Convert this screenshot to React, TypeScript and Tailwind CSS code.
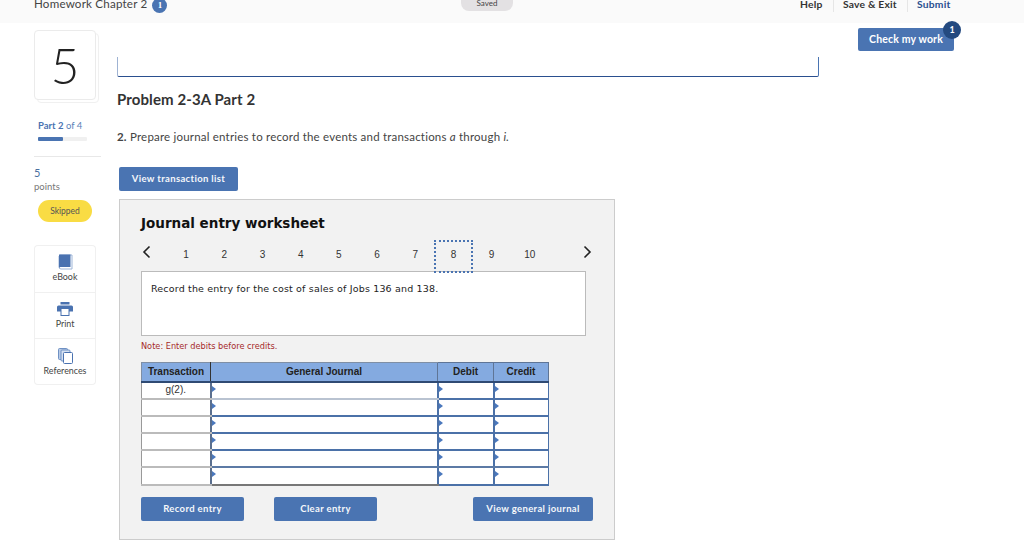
const lato = "font-['Lato','Open_Sans',sans-serif]";
const verdana = "font-['DejaVu_Sans',sans-serif]";
const arial = "font-['Liberation_Sans',Arial,sans-serif]";

// Journal table rows: border colour under each input row
const rows = [
  { label: "g(2).", line: "border-b-[#b9c3d1]", side: "border-b-[#4b71a8]" },
  { label: "", line: "border-b-[#4b71a8]", side: "border-b-[#4b71a8]" },
  { label: "", line: "border-b-[#4b71a8]", side: "border-b-[#4b71a8]" },
  { label: "", line: "border-b-[#4b71a8]", side: "border-b-[#4b71a8]" },
  { label: "", line: "border-b-[#5c7aa5]", side: "border-b-[#5c7aa5]" },
  { label: "", line: "border-b-[#777777]", side: "border-b-[#4b71a8]" },
];

const tabs = ["1", "2", "3", "4", "5", "6", "7", "8", "9", "10"];

function Marker() {
  return (
    <span className="absolute left-0 top-[3px] h-0 w-0 border-y-[3px] border-l-[4px] border-y-transparent border-l-[#4a78bd]" />
  );
}

function BookIcon() {
  return (
    <svg width="15" height="16" viewBox="0 0 15 16">
      <path d="M2 1h12v14H3a2 2 0 0 1-2-2V2z" fill="#ffffff" stroke="#9db5d8" />
      <path d="M1 0.5h11.5v12.5H2.6A1.6 1.6 0 0 0 1 14.2z" fill="#4a72b0" />
    </svg>
  );
}

function PrintIcon() {
  return (
    <svg width="16" height="14" viewBox="0 0 16 14">
      <rect x="3.5" y="0" width="9" height="2.5" fill="#4a72b0" />
      <path d="M1.5 3.5h13A1.5 1.5 0 0 1 16 5v4.5H0V5a1.5 1.5 0 0 1 1.5-1.5z" fill="#4a72b0" />
      <rect x="4" y="6.5" width="8" height="7" fill="#ffffff" stroke="#4a72b0" />
    </svg>
  );
}

function RefIcon() {
  return (
    <svg width="15" height="16" viewBox="0 0 15 16">
      <rect x="0.5" y="0.5" width="9" height="11" rx="1" fill="#b9cbe6" stroke="#6f91c4" />
      <rect x="3" y="2" width="9" height="11" rx="1" fill="#d5e0f1" stroke="#6f91c4" />
      <rect x="5.5" y="4.5" width="9" height="11" rx="1" fill="#ffffff" stroke="#4a72b0" />
    </svg>
  );
}

function Tool({ icon, label, className }: { icon: React.ReactNode; label: string; className: string }) {
  return (
    <div className={`flex w-[62px] flex-col items-center border border-[#f0f0f0] bg-white ${className}`}>
      <div className="flex h-[16px] items-center">{icon}</div>
      <span className={`mt-[1px] text-[8.9px] leading-[12px] text-[#444444] ${lato}`}>{label}</span>
    </div>
  );
}

function BlueButton({ label, className }: { label: string; className: string }) {
  return (
    <button className={`flex h-[24px] items-center justify-center rounded-[2px] bg-[#4a74b2] pt-[1px] text-[9.5px] font-bold tracking-[0.35px] text-[#f4f7fb] ${lato} ${className}`}>
      {label}
    </button>
  );
}

export default function App() {
  return (
    <div className={`h-[559px] w-[1024px] overflow-hidden bg-white text-[#333333] ${lato}`}>
      {/* Top bar */}
      <div className="flex h-[23px] items-start overflow-hidden bg-[#fafafa] pl-[34px]">
        <div className="-mt-[6px] flex w-[427px] items-center">
          <span className="text-[11.6px] leading-[15px] tracking-[0.2px] text-[#444444]">Homework Chapter 2</span>
          <span className="ml-[5px] mt-[4px] flex h-[15px] w-[15px] items-center justify-center rounded-full bg-[#4a74b2] font-['Liberation_Serif',serif] text-[9px] font-bold text-white">
            1
          </span>
        </div>
        <div className="-mt-[1px] flex h-[12px] w-[52px] items-end justify-center rounded-b-[8px] bg-[#e3e1e3] pb-[3px] text-[8px] leading-[10px] text-[#444444]">
          Saved
        </div>
        <div className="ml-[287px] -mt-[2px] flex items-start text-[10.3px] font-bold leading-[13px] tracking-[0.2px]">
          <span className="w-[33px] text-[#333333]">Help</span>
          <span className="h-[14px] w-[1px] bg-[#e6e6e6]" />
          <span className="ml-[9px] w-[64px] text-[#333333]">Save &amp; Exit</span>
          <span className="h-[14px] w-[1px] bg-[#e6e6e6]" />
          <span className="ml-[9px] text-[#2a4f8f]">Submit</span>
        </div>
      </div>

      <div className="flex pl-[34px]">
        {/* Sidebar */}
        <div className="w-[83px] pt-[7px]">
          <div className="relative h-[73px] w-[65px]">
            <div className="absolute left-[3px] top-[3px] h-[70px] w-[62px] rounded-[4px] border border-[#f0f0f0]" />
            <div className="absolute left-0 top-0 flex h-[70px] w-[62px] items-center justify-center rounded-[4px] border border-[#ebebeb] bg-white text-[50px] font-light leading-none text-[#222222]">
              5
            </div>
          </div>
          <p className="mt-[17px] pl-[4px] text-[9.5px] leading-[12px] text-[#5a7fb8]">
            <span className="font-bold text-[#4a74b2]">Part 2</span> of 4
          </p>
          <div className="ml-[4px] mt-[5px] h-[4px] w-[49px] rounded-[1px] bg-[#f0f0f0]">
            <div className="h-full w-[25px] rounded-[1px] bg-[#4a74b2]" />
          </div>
          <div className="mt-[15px] h-[1px] w-[67px] bg-[#e8e8e8]" />
          <p className="mt-[9px] text-[11px] leading-[13px] text-[#4a6f9f]">5</p>
          <p className="mt-[1px] text-[9.5px] leading-[13px] text-[#777777]">points</p>
          <div className="ml-[4px] mt-[7px] flex h-[22px] w-[54px] items-center justify-center rounded-full bg-[#f9dc44] text-[8.5px] text-[#555555]">
            Skipped
          </div>
          <div className="mt-[23px] flex flex-col">
            <Tool icon={<BookIcon />} label="eBook" className="h-[47px] rounded-t-[4px] border-b-0 pt-[8px]" />
            <Tool icon={<PrintIcon />} label="Print" className="h-[47px] pt-[8px]" />
            <Tool icon={<RefIcon />} label="References" className="h-[46px] rounded-b-[4px] border-t-0 pt-[9px]" />
          </div>
        </div>

        {/* Main column */}
        <div className="w-[702px]">
          <div className="mt-[34px] h-[20px] rounded-b-[2px] border-x border-b border-x-[#9fb3d3] border-b-[#2a4f8f] border-r-[#4a74b2]" />
          <h1 className="mt-[13px] text-[15px] font-bold leading-[18px] tracking-[0.1px] text-[#333333]">Problem 2-3A Part 2</h1>
          <p className="mt-[21px] text-[11.5px] leading-[16px] tracking-[0.2px] text-[#444444]">
            <b>2.</b> Prepare journal entries to record the events and transactions <i>a</i> through <i>i.</i>
          </p>
          <BlueButton label="View transaction list" className="ml-[2px] mt-[22px] w-[119px]" />

          {/* Worksheet */}
          <div className={`ml-[2px] mt-[8px] h-[341px] w-[496px] border border-[#cccccc] bg-[#f2f2f2] pl-[21px] pt-[14px] ${verdana}`}>
            <h2 className="text-[13.5px] font-bold leading-[18px] text-[#111111]">Journal entry worksheet</h2>

            <div className={`relative z-10 mt-[8px] flex h-[33px] items-center text-[10px] text-[#333333] ${arial}`}>
              <span className="flex w-[26px] -translate-y-[5px]">
                <svg width="10" height="14" viewBox="0 0 10 14" className="ml-[1px]">
                  <path d="M7.5 1.5 2 7l5.5 5.5" fill="none" stroke="#222222" strokeWidth="1.6" />
                </svg>
              </span>
              {tabs.map((tab) => (
                <span
                  key={tab}
                  className={`flex h-[33px] w-[38.2px] shrink-0 items-center justify-center pb-[4px] ${
                    tab === "8" ? "border-2 border-dotted border-[#4a74b2]" : ""
                  }`}
                >
                  {tab}
                </span>
              ))}
              <span className="ml-[33px] flex -translate-y-[5px]">
                <svg width="10" height="14" viewBox="0 0 10 14">
                  <path d="M2.5 1.5 8 7l-5.5 5.5" fill="none" stroke="#222222" strokeWidth="1.6" />
                </svg>
              </span>
            </div>

            <div className="-mt-[2px] h-[65px] w-[445px] border border-[#bbbbbb] bg-white pl-[9px] pt-[10px] text-[9.5px] leading-[14px] tracking-[0.17px] text-[#222222]">
              Record the entry for the cost of sales of Jobs 136 and 138.
            </div>
            <p className="mt-[4px] text-[8.2px] leading-[13px] text-[#a52a2a]">Note: Enter debits before credits.</p>

            <table className={`mt-[9px] w-[407px] table-fixed border-collapse text-[10px] ${arial}`}>
              <colgroup>
                <col className="w-[69px]" />
                <col className="w-[227px]" />
                <col className="w-[56px]" />
                <col className="w-[55px]" />
              </colgroup>
              <thead>
                <tr className="h-[19px] bg-[#84aae0] font-bold text-[#222222]">
                  <th className="border border-[#7f8fa5] border-b-2 border-b-[#2f4a73] border-r-[#333333]">Transaction</th>
                  <th className="border-y border-y-[#7f8fa5] border-b-2 border-b-[#2f4a73]">General Journal</th>
                  <th className="border border-[#5f7596] border-b-2 border-b-[#2f4a73]">Debit</th>
                  <th className="border border-[#5f7596] border-b-2 border-b-[#2f4a73]">Credit</th>
                </tr>
              </thead>
              <tbody>
                {rows.map((row, i) => (
                  <tr key={i} className="h-[17.2px] bg-white">
                    <td className="border-x-0 border-b-2 border-l border-[#bbbbbb] border-l-[#999999] text-center text-[10px] leading-[12px] text-[#333333]">
                      {row.label}
                    </td>
                    <td className={`relative border-b-2 border-l-2 border-l-[#5a6f8f] ${row.line}`}>
                      <Marker />
                    </td>
                    <td className={`relative border-b-2 border-l-2 border-l-[#4b71a8] ${row.side}`}>
                      <Marker />
                    </td>
                    <td className={`relative border-b-2 border-l-2 border-r border-l-[#4b71a8] border-r-[#4b71a8] ${row.side}`}>
                      <Marker />
                    </td>
                  </tr>
                ))}
              </tbody>
            </table>

            <div className="mt-[11px] flex">
              <BlueButton label="Record entry" className="w-[103px]" />
              <BlueButton label="Clear entry" className="ml-[30px] w-[103px]" />
              <BlueButton label="View general journal" className="ml-[96px] w-[120px]" />
            </div>
          </div>
        </div>

        {/* Right column */}
        <div className="relative ml-[39px] mt-[5px] h-[23px] w-[96px]">
          <button className="flex h-[23px] w-[96px] items-center justify-center rounded-[2px] bg-[#4a74b2] text-[10.5px] font-bold tracking-[0.15px] text-white">
            Check my work
          </button>
          <span className="absolute -right-[7px] -top-[7px] flex h-[18px] w-[18px] items-center justify-center rounded-full bg-[#244a80] text-[9px] font-bold text-white">
            1
          </span>
        </div>
      </div>
    </div>
  );
}
